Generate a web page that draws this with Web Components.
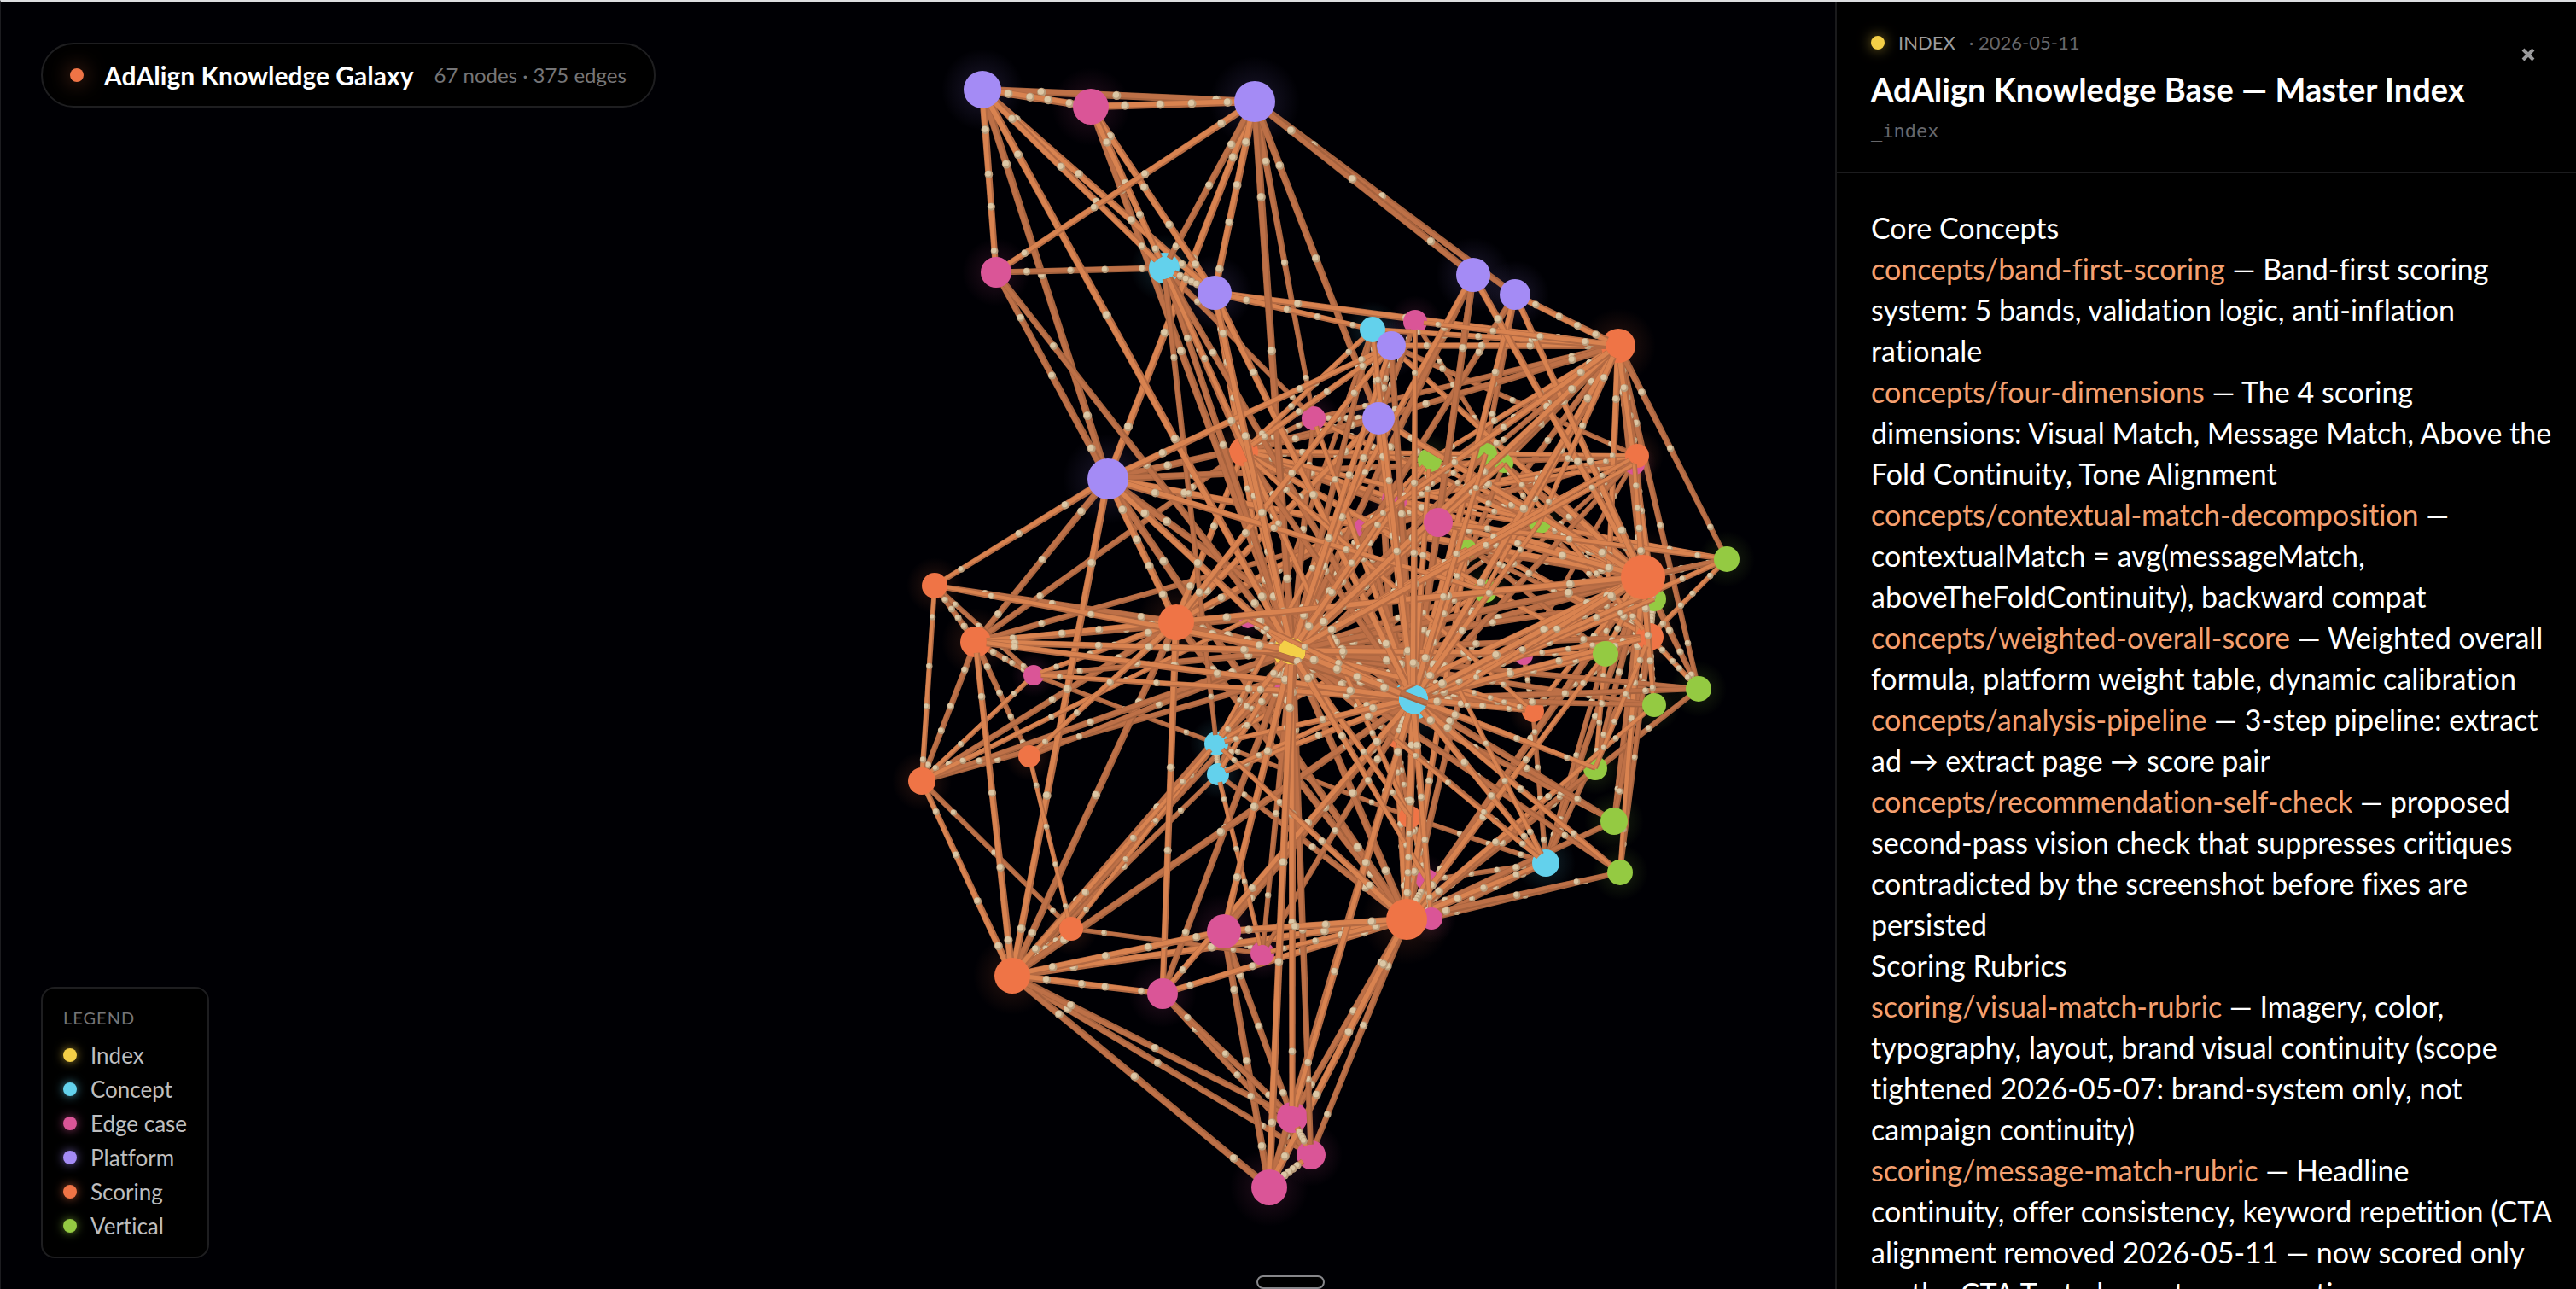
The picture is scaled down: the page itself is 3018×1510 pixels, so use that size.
<!DOCTYPE html>
<html lang="en">
<head>
<meta charset="utf-8">
<title>AdAlign Knowledge Galaxy</title>
<style>
    html, body {
        margin: 0;
        height: 100%;
        overflow: hidden;
        background: #000004;
    }
    body {
        font-family: Lato, "Liberation Sans", sans-serif;
        font-variant-ligatures: none;
        color: #fff;
    }
</style>
</head>
<body>
<galaxy-app>
    <galaxy-graph slot="stage"></galaxy-graph>
    <galaxy-title slot="overlay" stats="67 nodes · 375 edges">AdAlign Knowledge Galaxy</galaxy-title>
    <galaxy-legend slot="overlay">
        <galaxy-key type="index">Index</galaxy-key>
        <galaxy-key type="concept">Concept</galaxy-key>
        <galaxy-key type="edge-case">Edge case</galaxy-key>
        <galaxy-key type="platform">Platform</galaxy-key>
        <galaxy-key type="scoring">Scoring</galaxy-key>
        <galaxy-key type="vertical">Vertical</galaxy-key>
    </galaxy-legend>
    <galaxy-panel slot="panel" type="index" kind="Index" date="2026-05-11" slug="_index" heading="AdAlign Knowledge Base — Master Index">
        <div>Core Concepts</div>
        <galaxy-entry slug="concepts/band-first-scoring">Band-first scoring system: 5 bands, validation logic, anti-inflation rationale</galaxy-entry>
        <galaxy-entry slug="concepts/four-dimensions">The 4 scoring dimensions: Visual Match, Message Match, Above the Fold Continuity, Tone Alignment</galaxy-entry>
        <galaxy-entry slug="concepts/contextual-match-decomposition">contextualMatch = avg(messageMatch, aboveTheFoldContinuity), backward compat</galaxy-entry>
        <galaxy-entry slug="concepts/weighted-overall-score">Weighted overall formula, platform weight table, dynamic calibration</galaxy-entry>
        <galaxy-entry slug="concepts/analysis-pipeline">3-step pipeline: extract ad → extract page → score pair</galaxy-entry>
        <galaxy-entry slug="concepts/recommendation-self-check">proposed second-pass vision check that suppresses critiques contradicted by the screenshot before fixes are persisted</galaxy-entry>
        <div>Scoring Rubrics</div>
        <galaxy-entry slug="scoring/visual-match-rubric">Imagery, color, typography, layout, brand visual continuity (scope tightened 2026-05-07: brand-system only, not campaign continuity)</galaxy-entry>
        <galaxy-entry slug="scoring/message-match-rubric">Headline<br>continuity, offer consistency, keyword repetition (CTA alignment removed 2026-05-11 — now scored only<br>on the CTA Text element row: question — answer</galaxy-entry>
    </galaxy-panel>
</galaxy-app>
<script>
let COMPONENT = {};

COMPONENT.Colors = {
    "index": "#f4cf47",
    "concept": "#63d1ec",
    "edge-case": "#da5597",
    "platform": "#a48bf5",
    "scoring": "#ef7446",
    "vertical": "#94ca42"
};

COMPONENT.Widget = class extends HTMLElement {
    static register(tag) {
        window.customElements.define(tag, this);
    }
    connectedCallback() {
        if (this.shadowRoot) {
            return;
        }
        let template = document.createElement("template");
        template.innerHTML = `<style>${this.css()}</style>${this.render()}`;
        this.attachShadow({ mode: "open" }).appendChild(template.content.cloneNode(true));
    }
    attrib(name) {
        return this.getAttribute(name) || "";
    }
    color() {
        return COMPONENT.Colors[this.attrib("type")];
    }
    css() {
        return ":host { display: block; }";
    }
    render() {
        return "<slot></slot>";
    }
};

COMPONENT.App = class extends COMPONENT.Widget {
    css() {
        return `
            :host {
                display: grid;
                grid-template-columns: minmax(0, 1fr) 868px;
                height: 100vh;
                box-sizing: border-box;
                border-top: 2px solid #dcdee0;
                border-left: 1px solid #1c1c20;
            }
            main {
                position: relative;
                min-width: 0;
                overflow: hidden;
            }
            ::slotted(galaxy-title) {
                position: absolute;
                left: 47px;
                top: 48px;
            }
            ::slotted(galaxy-legend) {
                position: absolute;
                left: 47px;
                bottom: 36px;
            }
            .handle {
                position: absolute;
                z-index: 2;
                left: 50%;
                bottom: 0;
                width: 80px;
                height: 16px;
                margin-left: -37px;
                padding: 0;
                box-sizing: border-box;
                border: 2px solid #86868a;
                border-radius: 8px;
                background: #000;
            }`;
    }
    render() {
        return `
            <main>
                <slot name="stage"></slot>
                <slot name="overlay"></slot>
            </main>
            <slot name="panel"></slot>
            <button class="handle" aria-label="Open drawer"></button>`;
    }
};

COMPONENT.Title = class extends COMPONENT.Widget {
    css() {
        return `
            :host {
                display: flex;
                align-items: center;
                gap: 24px;
                height: 72px;
                padding: 0 32px;
                border: 2px solid #1e1e20;
                border-radius: 38px;
                background: #000;
            }
            i {
                width: 16px;
                height: 16px;
                border-radius: 50%;
                background: #ef7446;
                box-shadow: 0 0 24px #ef744699;
            }
            h1 {
                margin: 0;
                font-size: 30px;
                line-height: 40px;
                font-weight: 700;
            }
            span {
                font-size: 24px;
                line-height: 32px;
                color: #757577;
            }`;
    }
    render() {
        return `<i></i><h1><slot></slot></h1><span>${this.attrib("stats")}</span>`;
    }
};

COMPONENT.Legend = class extends COMPONENT.Widget {
    css() {
        return `
            :host {
                display: flex;
                flex-direction: column;
                gap: 8px;
                padding: 18px 24px 20px;
                border: 2px solid #1e1e20;
                border-radius: 16px;
                background: #000;
            }
            h2 {
                margin: 0 0 4px;
                font-size: 20px;
                line-height: 32px;
                font-weight: 400;
                letter-spacing: 1px;
                color: #757577;
                text-transform: uppercase;
            }`;
    }
    render() {
        return "<h2>Legend</h2><slot></slot>";
    }
};

COMPONENT.Key = class extends COMPONENT.Widget {
    css() {
        return `
            :host {
                display: flex;
                align-items: center;
                gap: 16px;
                font-size: 26px;
                line-height: 32px;
                color: #bebebe;
            }
            i {
                width: 16px;
                height: 16px;
                border-radius: 50%;
                background: ${this.color()};
                box-shadow: 0 0 12px ${this.color()}aa;
            }`;
    }
    render() {
        return "<i></i><slot></slot>";
    }
};

COMPONENT.Panel = class extends COMPONENT.Widget {
    css() {
        return `
            :host {
                display: flex;
                flex-direction: column;
                min-height: 0;
                overflow: hidden;
                border-left: 2px solid #1a1a1c;
                background: #000;
            }
            header {
                display: flex;
                justify-content: space-between;
                align-items: flex-start;
                padding: 31px 40px;
                border-bottom: 2px solid #1c1c1e;
            }
            .meta {
                display: flex;
                align-items: center;
                gap: 16px;
                font-size: 22px;
                line-height: 34px;
                color: #67676a;
            }
            .meta b {
                font-weight: 400;
                text-transform: uppercase;
                color: #9b9b9d;
            }
            .meta i {
                width: 16px;
                height: 16px;
                border-radius: 50%;
                background: ${this.color()};
                box-shadow: 0 0 16px ${this.color()}99;
            }
            h2 {
                margin: 15px 0 12px;
                font-size: 38px;
                line-height: 44px;
                font-weight: 700;
            }
            code {
                display: block;
                font: 22px/32px "DejaVu Sans Mono", monospace;
                color: #67676a;
            }
            button {
                width: 32px;
                height: 62px;
                padding: 0;
                border: 0;
                background: none;
                color: #9b9b9d;
            }
            svg {
                display: block;
                margin: auto;
            }
            section {
                min-height: 0;
                overflow: hidden;
                padding: 40px 24px 0 40px;
                font-size: 34px;
                line-height: 48px;
            }`;
    }
    render() {
        return `
            <header>
                <div>
                    <div class="meta"><i></i><b>${this.attrib("kind")}</b><span>· ${this.attrib("date")}</span></div>
                    <h2>${this.attrib("heading")}</h2>
                    <code>${this.attrib("slug")}</code>
                </div>
                <button aria-label="Close">
                    <svg width="16" height="16" viewBox="0 0 16 16" fill="none" stroke="currentColor" stroke-width="4"><path d="M2 2L14 14M14 2L2 14"/></svg>
                </button>
            </header>
            <section><slot></slot></section>`;
    }
};

COMPONENT.Entry = class extends COMPONENT.Widget {
    css() {
        return `
            :host {
                display: block;
            }
            a {
                color: #f4a070;
                text-decoration: none;
            }`;
    }
    render() {
        return `<a href="#${this.attrib("slug")}">${this.attrib("slug")}</a> — <slot></slot>`;
    }
};

COMPONENT.Graph = class extends COMPONENT.Widget {
    types() {
        return { y: "index", c: "concept", m: "edge-case", p: "platform", o: "scoring", g: "vertical" };
    }
    // id: x, y, radius, layer (0 between the links, 1 over them, 2 links reach into it, 3 hub covered by its links)
    nodes() {
        return {
            y1: [1514, 763, 22, 3],
            c1: [1364, 314, 18, 3], c2: [1608, 386, 15, 1], c3: [1656, 819, 24, 3], c4: [1811, 1011, 16, 2],
            c5: [1425, 871, 14, 2], c6: [1427, 907, 13, 2],
            p1: [1151, 105, 22, 1], p2: [1470, 119, 24, 1], p3: [1423, 343, 20, 1], p4: [1298, 561, 24, 1],
            p5: [1726, 322, 20, 1], p6: [1775, 345, 18, 1], p7: [1630, 405, 17, 1], p8: [1615, 490, 19, 1],
            m1: [1278, 125, 21, 1], m2: [1167, 319, 18, 1], m3: [1539, 490, 14, 2], m4: [1658, 377, 14, 2],
            m5: [1915, 544, 12, 0], m6: [1634, 585, 15, 2], m7: [1685, 612, 17, 1], m8: [1597, 618, 11, 0],
            m9: [1785, 768, 11, 0], m10: [1709, 806, 11, 0], m11: [1672, 1031, 13, 0], m12: [1677, 1076, 13, 1],
            m13: [1211, 791, 12, 2], m14: [1462, 726, 10, 0], m15: [1501, 803, 9, 0], m16: [1434, 1091, 20, 1],
            m17: [1362, 1164, 18, 1], m18: [1479, 1117, 14, 2], m19: [1514, 1309, 18, 2], m20: [1536, 1353, 17, 2],
            m21: [1487, 1391, 21, 1],
            o1: [1457, 529, 17, 2], o2: [1896, 405, 20, 2], o3: [1918, 534, 14, 2], o4: [1925, 676, 26, 1],
            o5: [1933, 746, 16, 2], o6: [1796, 833, 13, 2], o7: [1635, 866, 10, 0], o8: [1652, 957, 13, 0],
            o9: [1648, 1077, 24, 1], o10: [1095, 686, 15, 1], o11: [1143, 752, 18, 2], o12: [1378, 729, 21, 1],
            o13: [1206, 886, 13, 1], o14: [1080, 915, 16, 1], o15: [1255, 1088, 14, 1], o16: [1186, 1143, 21, 1],
            g1: [1675, 539, 14, 2], g2: [1741, 532, 13, 0], g3: [1762, 543, 11, 0], g4: [1804, 612, 13, 0],
            g5: [1719, 643, 11, 0], g6: [1740, 692, 14, 0], g7: [2023, 655, 15, 1], g8: [1938, 702, 14, 0],
            g9: [1881, 766, 15, 1], g10: [1990, 807, 15, 1], g11: [1938, 826, 14, 1], g12: [1869, 900, 14, 0],
            g13: [1891, 962, 16, 1], g14: [1898, 1022, 15, 1]
        };
    }
    links() {
        return {
            p1: "p2 m1 m2 p4 y1 c1 p3",
            m1: "p2 c1 y1 p3",
            p2: "m2 c1 p4 p3 y1 m3 p8 p5 p6",
            m2: "c1 p4 y1",
            c1: "y1 c3 o1 m3 c5 p3 o8",
            p3: "o2 c2 y1 o1 c3 m15",
            p4: "p7 o3 y1 c3 o9 o12 o11 o16 o10 p8 o4 g6",
            p5: "y1 c3 o4 c5 m7",
            p6: "y1 c3 o4 o2 g5",
            c2: "o2 y1 o1 p8 c3 o4 c6",
            m4: "y1 c3 o2 p8 g4",
            p7: "o2 o11 o12 y1 c3 o3 p8 o1",
            p8: "o2 o4 y1 c3 o1 o12 m3 o9",
            m3: "y1 o2 o4 g4 o1 c3",
            o1: "g1 o3 o4 y1 c3 m6 m7 g6 o12 g9 o6 o8",
            o2: "y1 c3 g1 g2 g3 g4 g9 g5 o3 o4 o5 g7 g10 g8 m6 m7 m8 g6 c5",
            o3: "y1 c3 m6 m8 g5 g6 o1 o4 o11 o5 m9",
            m5: "y1 m6 o4",
            g1: "y1 c3 o4 g2 m8",
            g2: "y1 c3 o4 o12",
            g3: "y1 c3 o4 o5",
            m6: "y1 c3 o4 o5 g7",
            m7: "y1 c3 o4 g7 o5 g9",
            m8: "y1 c3 o4 o12",
            g4: "y1 c3 o4 o5 o1 c5",
            g5: "y1 c3 o4 o5 o9",
            g6: "y1 c3 o4 o9 c5",
            g7: "o4 o5 c3 y1",
            g8: "y1 c3 o4 o5",
            o4: "y1 c3 o5 o12 c4 g9 g10 g12 g13 g14 g11 m9 m10 o6 o9 c6 o14",
            o5: "y1 c3 g10 g11 g12 c4 o6 m9 m10 g13 g14",
            g9: "y1 c3 o9 g12 c4",
            g10: "y1 c3 o9",
            g11: "y1 c3 o9",
            g12: "y1 c3 o9",
            g13: "y1 c3 o9",
            g14: "y1 c3 o9 m12",
            c4: "y1 c3 o9 o6 o8 o7 m12 m11 m10",
            m9: "y1 c3 o6",
            m10: "y1 c3 o6",
            o6: "y1 c3",
            c3: "y1 o9 o7 o8 m11 m12 m14 m15 o12 o11 c5 c6 m13 o16 m16 m17 m18 m19 m21",
            o7: "y1 o9 m11 o8",
            o8: "y1 o9 m11 c5",
            m11: "y1 o9 m12",
            o9: "y1 m16 m18 m17 o16 m19 m20 m21 o12 c5 c6",
            m14: "y1 o12 o14 o11",
            m15: "y1 o16",
            o10: "o11 m13 o14 o12 y1 p4",
            o11: "o14 o13 o16 y1 o12 m13",
            o12: "y1 o16 o14 m17 o13 o9",
            m13: "y1 o12 c5 o14",
            o13: "y1 o15",
            o14: "y1 o16 o15",
            c5: "y1 c6 o16 o15",
            c6: "y1 o16 m18",
            o15: "o16 m18",
            o16: "y1 m16 m17 m19 m20 m21",
            m16: "y1 m19 m21 m18",
            m17: "y1 m19 m20",
            m18: "y1",
            m19: "y1 m21 m20",
            m20: "y1 m21",
            m21: "y1"
        };
    }
    css() {
        return `
            :host {
                display: block;
                height: 100%;
            }
            svg {
                display: block;
                width: 100%;
                height: 100%;
            }`;
    }
    random() {
        this.seed = (this.seed * 16807) % 2147483647;
        return this.seed / 2147483647;
    }
    // tapered quad between two points, shifted sideways by a share of its width
    quad(a, b, wa, wb, shift, fill) {
        let dx = b[0] - a[0];
        let dy = b[1] - a[1];
        let len = Math.hypot(dx, dy) || 1;
        let nx = -dy / len;
        let ny = dx / len;
        // the light comes from the upper left
        if (nx + ny * 0.4 > 0) {
            nx = -nx;
            ny = -ny;
        }
        let point = (p, w, side) => {
            let d = w * (shift + side);
            return `${(p[0] + nx * d).toFixed(1)} ${(p[1] + ny * d).toFixed(1)}`;
        };
        let half = fill.half;
        return `<path d="M${point(a, wa, half)}L${point(b, wb, half)}L${point(b, wb, -half)}L${point(a, wa, -half)}Z" fill="${fill.color}"/>`;
    }
    link(from, to) {
        let dx = to[0] - from[0];
        let dy = to[1] - from[1];
        let len = Math.hypot(dx, dy);
        let at = t => [from[0] + dx * t, from[1] + dy * t];
        let width = node => Math.max(5.6, Math.min(8.6, node[2] * 0.4));
        let inset = node => node[3] >= 2 ? node[2] * 0.72 / len : 0;
        let t0 = inset(from);
        let t1 = 1 - inset(to);
        let wa = width(from);
        let wb = width(to);
        let near = this.random();
        let base = near > 0.5 ? "#b36a43" : "#a5623e";
        let lit = near > 0.5 ? "#d98350" : "#bd7047";
        let html = this.quad(at(t0), at(t1), wa, wb, 0, { half: 0.5, color: base });
        html += this.quad(at(t0), at(t1), wa, wb, 0.1, { half: 0.32, color: lit });
        let phase = this.random() * 0.06;
        let steps = near > 0.6 || len < 200 ? [0.06, 0.36, 0.6, 0.88] : [0.1, 0.42, 0.84];
        for (let t of steps) {
            let start = from[2] / len;
            let end = 1 - to[2] / len;
            let pos = start + (end - start) * Math.min(0.97, t + phase + this.random() * 0.05);
            let [x, y] = at(pos);
            let r = (wa + (wb - wa) * pos) * 0.6;
            html += `<circle cx="${x.toFixed(1)}" cy="${y.toFixed(1)}" r="${r.toFixed(1)}" fill="#b89c7b"/>`;
            html += `<circle cx="${(x - 0.8).toFixed(1)}" cy="${(y - 0.8).toFixed(1)}" r="${(r * 0.7).toFixed(1)}" fill="#dcc7a5"/>`;
        }
        let hub = from[3] === 3 || to[3] === 3;
        return { depth: hub ? 0.62 + near * 0.38 : near, html: html };
    }
    render() {
        this.seed = 4711;
        let nodes = this.nodes();
        let links = this.links();
        let types = this.types();
        let colors = COMPONENT.Colors;
        let defs = "";
        for (let key in types) {
            let color = colors[types[key]];
            defs += `<radialGradient id="glow-${key}"><stop offset="0.3" stop-color="${color}" stop-opacity="0.12"/><stop offset="1" stop-color="${color}" stop-opacity="0"/></radialGradient>`;
        }
        let glows = "";
        let between = "";
        let over = "";
        for (let id in nodes) {
            let [x, y, r, layer] = nodes[id];
            let circle = `<circle cx="${x}" cy="${y}" r="${r}" fill="${colors[types[id[0]]]}"/>`;
            glows += `<circle cx="${x}" cy="${y}" r="${Math.round(r * 2.2)}" fill="url(#glow-${id[0]})"/>`;
            if (layer === 1) {
                over += circle;
            }
            else {
                between += circle;
            }
        }
        let seen = {};
        let list = [];
        for (let from in links) {
            for (let to of links[from].split(" ")) {
                let key = [from, to].sort().join();
                if (from !== to && !seen[key]) {
                    seen[key] = true;
                    list.push(this.link(nodes[from], nodes[to]));
                }
            }
        }
        list.sort((a, b) => a.depth - b.depth);
        let join = items => items.map(e => e.html).join("");
        return `
            <svg viewBox="1 2 2149 1508" preserveAspectRatio="xMidYMid meet" role="img" aria-label="Knowledge graph">
                <defs>${defs}</defs>
                <g>${glows}</g>
                <g>${join(list.filter(e => e.depth < 0.7))}</g>
                <g>${between}</g>
                <g>${join(list.filter(e => e.depth >= 0.7))}</g>
                <g>${over}</g>
            </svg>`;
    }
};

COMPONENT.App.register("galaxy-app");
COMPONENT.Title.register("galaxy-title");
COMPONENT.Legend.register("galaxy-legend");
COMPONENT.Key.register("galaxy-key");
COMPONENT.Panel.register("galaxy-panel");
COMPONENT.Entry.register("galaxy-entry");
COMPONENT.Graph.register("galaxy-graph");
</script>
</body>
</html>
